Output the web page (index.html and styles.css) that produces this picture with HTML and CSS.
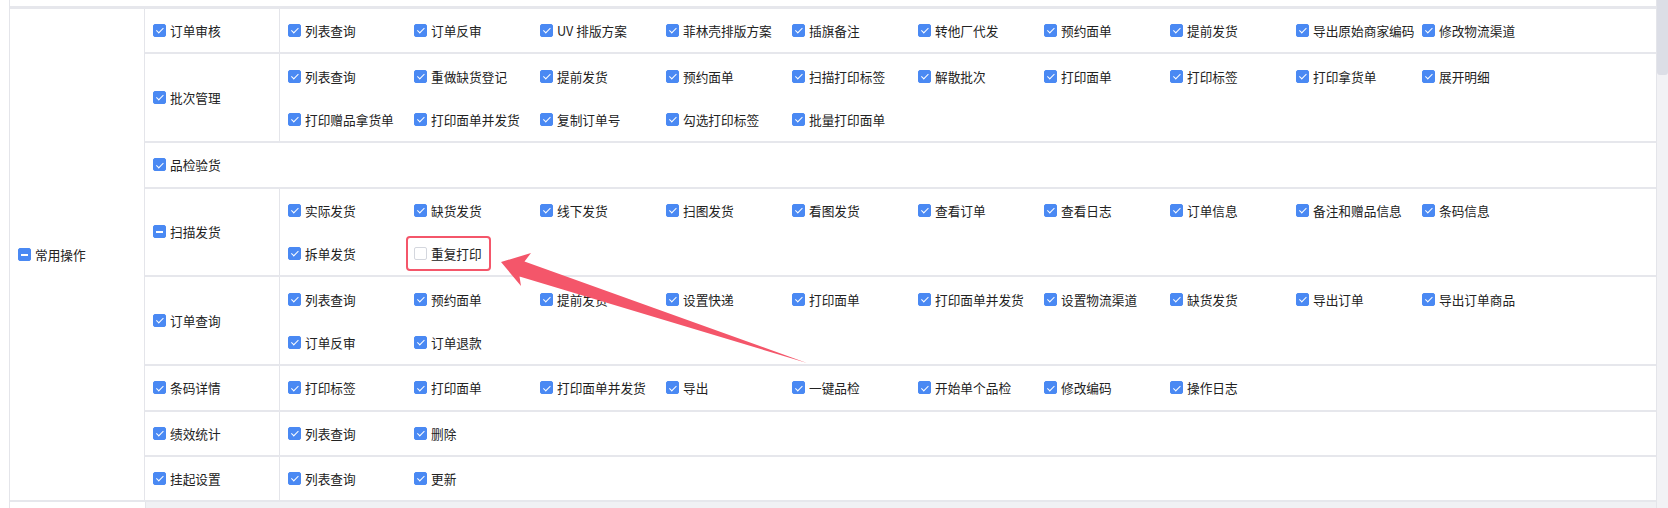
FILE: index.html
```html
<!DOCTYPE html>
<html lang="zh-CN">
<head>
<meta charset="utf-8">
<title>权限设置</title>
<link rel="stylesheet" href="styles.css">
</head>
<body>
<div class="screen">
  <div class="main">
    <div class="table">
      <div class="stub-top"></div>
      <div class="group">
        <div class="cell-main">
          <label class="item"><span class="cb part"></span><span>常用操作</span></label>
        </div>
        <div class="subrows">
          <div class="subrow">
            <div class="cell-sub"><label class="item"><span class="cb on"></span><span>订单审核</span></label></div>
            <div class="cell-ops">
              <label class="item"><span class="cb on"></span><span>列表查询</span></label>
              <label class="item"><span class="cb on"></span><span>订单反审</span></label>
              <label class="item"><span class="cb on"></span><span>UV 排版方案</span></label>
              <label class="item"><span class="cb on"></span><span>菲林壳排版方案</span></label>
              <label class="item"><span class="cb on"></span><span>插旗备注</span></label>
              <label class="item"><span class="cb on"></span><span>转他厂代发</span></label>
              <label class="item"><span class="cb on"></span><span>预约面单</span></label>
              <label class="item"><span class="cb on"></span><span>提前发货</span></label>
              <label class="item"><span class="cb on"></span><span>导出原始商家编码</span></label>
              <label class="item"><span class="cb on"></span><span>修改物流渠道</span></label>
            </div>
          </div>
          <div class="subrow">
            <div class="cell-sub"><label class="item"><span class="cb on"></span><span>批次管理</span></label></div>
            <div class="cell-ops">
              <label class="item"><span class="cb on"></span><span>列表查询</span></label>
              <label class="item"><span class="cb on"></span><span>重做缺货登记</span></label>
              <label class="item"><span class="cb on"></span><span>提前发货</span></label>
              <label class="item"><span class="cb on"></span><span>预约面单</span></label>
              <label class="item"><span class="cb on"></span><span>扫描打印标签</span></label>
              <label class="item"><span class="cb on"></span><span>解散批次</span></label>
              <label class="item"><span class="cb on"></span><span>打印面单</span></label>
              <label class="item"><span class="cb on"></span><span>打印标签</span></label>
              <label class="item"><span class="cb on"></span><span>打印拿货单</span></label>
              <label class="item"><span class="cb on"></span><span>展开明细</span></label>
              <label class="item"><span class="cb on"></span><span>打印赠品拿货单</span></label>
              <label class="item"><span class="cb on"></span><span>打印面单并发货</span></label>
              <label class="item"><span class="cb on"></span><span>复制订单号</span></label>
              <label class="item"><span class="cb on"></span><span>勾选打印标签</span></label>
              <label class="item"><span class="cb on"></span><span>批量打印面单</span></label>
            </div>
          </div>
          <div class="subrow">
            <div class="cell-sub"><label class="item"><span class="cb on"></span><span>品检验货</span></label></div>
            <div class="cell-ops no-div"></div>
          </div>
          <div class="subrow">
            <div class="cell-sub"><label class="item"><span class="cb part"></span><span>扫描发货</span></label></div>
            <div class="cell-ops">
              <label class="item"><span class="cb on"></span><span>实际发货</span></label>
              <label class="item"><span class="cb on"></span><span>缺货发货</span></label>
              <label class="item"><span class="cb on"></span><span>线下发货</span></label>
              <label class="item"><span class="cb on"></span><span>扫图发货</span></label>
              <label class="item"><span class="cb on"></span><span>看图发货</span></label>
              <label class="item"><span class="cb on"></span><span>查看订单</span></label>
              <label class="item"><span class="cb on"></span><span>查看日志</span></label>
              <label class="item"><span class="cb on"></span><span>订单信息</span></label>
              <label class="item"><span class="cb on"></span><span>备注和赠品信息</span></label>
              <label class="item"><span class="cb on"></span><span>条码信息</span></label>
              <label class="item"><span class="cb on"></span><span>拆单发货</span></label>
              <label class="item highlight"><span class="cb"></span><span>重复打印</span></label>
            </div>
          </div>
          <div class="subrow">
            <div class="cell-sub"><label class="item"><span class="cb on"></span><span>订单查询</span></label></div>
            <div class="cell-ops">
              <label class="item"><span class="cb on"></span><span>列表查询</span></label>
              <label class="item"><span class="cb on"></span><span>预约面单</span></label>
              <label class="item"><span class="cb on"></span><span>提前发货</span></label>
              <label class="item"><span class="cb on"></span><span>设置快递</span></label>
              <label class="item"><span class="cb on"></span><span>打印面单</span></label>
              <label class="item"><span class="cb on"></span><span>打印面单并发货</span></label>
              <label class="item"><span class="cb on"></span><span>设置物流渠道</span></label>
              <label class="item"><span class="cb on"></span><span>缺货发货</span></label>
              <label class="item"><span class="cb on"></span><span>导出订单</span></label>
              <label class="item"><span class="cb on"></span><span>导出订单商品</span></label>
              <label class="item"><span class="cb on"></span><span>订单反审</span></label>
              <label class="item"><span class="cb on"></span><span>订单退款</span></label>
            </div>
          </div>
          <div class="subrow">
            <div class="cell-sub"><label class="item"><span class="cb on"></span><span>条码详情</span></label></div>
            <div class="cell-ops">
              <label class="item"><span class="cb on"></span><span>打印标签</span></label>
              <label class="item"><span class="cb on"></span><span>打印面单</span></label>
              <label class="item"><span class="cb on"></span><span>打印面单并发货</span></label>
              <label class="item"><span class="cb on"></span><span>导出</span></label>
              <label class="item"><span class="cb on"></span><span>一键品检</span></label>
              <label class="item"><span class="cb on"></span><span>开始单个品检</span></label>
              <label class="item"><span class="cb on"></span><span>修改编码</span></label>
              <label class="item"><span class="cb on"></span><span>操作日志</span></label>
            </div>
          </div>
          <div class="subrow">
            <div class="cell-sub"><label class="item"><span class="cb on"></span><span>绩效统计</span></label></div>
            <div class="cell-ops">
              <label class="item"><span class="cb on"></span><span>列表查询</span></label>
              <label class="item"><span class="cb on"></span><span>删除</span></label>
            </div>
          </div>
          <div class="subrow">
            <div class="cell-sub"><label class="item"><span class="cb on"></span><span>挂起设置</span></label></div>
            <div class="cell-ops">
              <label class="item"><span class="cb on"></span><span>列表查询</span></label>
              <label class="item"><span class="cb on"></span><span>更新</span></label>
            </div>
          </div>
        </div>
      </div>
      <div class="stub-bottom">
        <div class="stub-main"></div>
        <div class="stub-rest"></div>
      </div>
    </div>
  </div>
  <div class="scrollbar"><div class="thumb"></div></div>
  <svg class="arrow" width="1668" height="508" viewBox="0 0 1668 508" aria-hidden="true">
    <polygon points="501,262 531,253 524.5,261.5 807,363 519.5,276.5 521,286" fill="#f4566a"/>
  </svg>
</div>
</body>
</html>
```

FILE: styles.css
```css
html, body {
  margin: 0;
  padding: 0;
  background: #ffffff;
}

body {
  font-family: "Noto Sans CJK SC", "Microsoft YaHei", "Noto Sans", sans-serif;
  font-size: 12.7px;
  color: #222222;
}

.screen {
  position: relative;
  display: flex;
  width: 1668px;
  height: 508px;
  overflow: hidden;
}

.main {
  flex: 0 0 1657px;
  box-sizing: border-box;
  padding-left: 9px;
}

.table {
  border-left: 1px solid #e4e5ea;
  border-right: 1px solid #e4e5ea;
}

.stub-top {
  height: 6px;
  border-bottom: 3px solid #e6e7ec;
}

.group {
  display: flex;
  border-bottom: 2px solid #e6e7ec;
}

.cell-main {
  flex: 0 0 135px;
  border-right: 1px solid #e4e5ea;
  display: flex;
  align-items: center;
  padding-left: 8px;
  box-sizing: border-box;
}

.subrows {
  flex: 1;
  display: flex;
  flex-direction: column;
}

.subrow {
  display: flex;
  border-bottom: 2px solid #e6e7ec;
}

.subrow:last-child {
  border-bottom: none;
}

.cell-sub {
  flex: 0 0 135px;
  box-sizing: border-box;
  padding-left: 8px;
  border-right: 1px solid #e4e5ea;
  display: flex;
  align-items: center;
  min-height: 43.4px;
}

.subrow:has(.no-div) .cell-sub {
  border-right-color: transparent;
}

.cell-ops {
  flex: 1;
  display: flex;
  flex-wrap: wrap;
  align-content: flex-start;
  padding-left: 8px;
}

.item {
  position: relative;
  display: flex;
  align-items: center;
  gap: 4px;
  width: 126px;
  height: 43.4px;
  white-space: nowrap;
  cursor: pointer;
}

.cell-sub .item,
.cell-main .item {
  width: auto;
}

.cb {
  position: relative;
  flex: 0 0 13px;
  width: 13px;
  height: 13px;
  box-sizing: border-box;
  border: 1px solid #d4d7de;
  border-radius: 2px;
  background: #ffffff;
}

.cb.on,
.cb.part {
  background: #4a89f3;
  border-color: #4a89f3;
}

.cb.on::after {
  content: "";
  position: absolute;
  left: 3.8px;
  top: 1.2px;
  width: 2.6px;
  height: 5.8px;
  border: solid #ffffff;
  border-width: 0 1.3px 1.3px 0;
  transform: rotate(45deg);
}

.cb.part::after {
  content: "";
  position: absolute;
  left: 2px;
  right: 2px;
  top: 4.8px;
  height: 1.6px;
  background: #ffffff;
}

.highlight::before {
  content: "";
  position: absolute;
  left: -8.5px;
  top: 4.5px;
  width: 85px;
  height: 35px;
  box-sizing: border-box;
  border: 2.4px solid #f4566a;
  border-radius: 4px;
}

.stub-bottom {
  display: flex;
  height: 8px;
}

.stub-main {
  flex: 0 0 135px;
  border-right: 1px solid #e4e5ea;
}

.stub-rest {
  flex: 1;
  background: #f0f1f4;
}

.scrollbar {
  flex: 0 0 11px;
  background: #f2f2f5;
}

.thumb {
  height: 75px;
  background: #dcdee6;
  border-radius: 0 0 3px 3px;
}

.arrow {
  position: absolute;
  left: 0;
  top: 0;
  pointer-events: none;
}
```
